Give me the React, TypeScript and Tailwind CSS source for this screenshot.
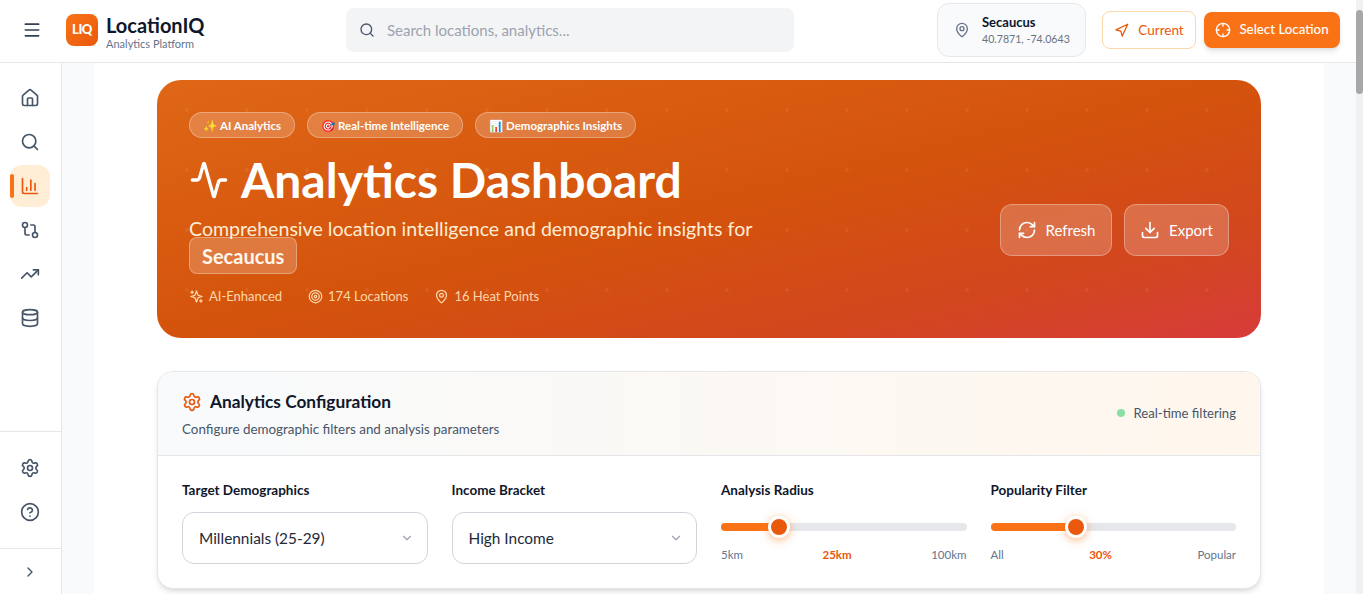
import React from "react";
import {
  Menu, House, Search, ChartColumn, GitCompare, TrendingUp, Database, Settings, CircleHelp, ChevronRight,
  MapPin, Navigation, Crosshair, Activity, Target, RefreshCw, Download, ChevronDown,
} from "lucide-react";

function NavItem({ icon: Icon, active }: { icon: typeof House; active?: boolean }) {
  return (
    <div className={`relative flex h-[42px] w-10 items-center justify-center rounded-xl ${active ? "bg-[#ffedd5] text-[#ea580c]" : "text-[#475569]"}`}>
      {active && <span className="absolute left-0 top-[9px] h-6 w-1 rounded-full bg-[#f97316]" />}
      <Icon size={20} strokeWidth={2} />
    </div>
  );
}

function SparkleIcon() {
  return (
    <svg width="15" height="15" viewBox="0 0 24 24" fill="none" stroke="currentColor" strokeWidth="2" strokeLinecap="round" strokeLinejoin="round">
      <path d="m12 3-1.912 5.813a2 2 0 0 1-1.275 1.275L3 12l5.813 1.912a2 2 0 0 1 1.275 1.275L12 21l1.912-5.813a2 2 0 0 1 1.275-1.275L21 12l-5.813-1.912a2 2 0 0 1-1.275-1.275L12 3Z" />
      <path d="M5 3v4M19 17v4M3 5h4M17 19h4" />
    </svg>
  );
}

function Pill({ emoji, label }: { emoji: string; label: string }) {
  return (
    <span className="flex h-[26px] items-center gap-[3px] rounded-full border border-white/30 bg-white/20 px-[13px] pt-px text-[11.5px] font-bold text-white">
      <span>{emoji}</span>
      {label}
    </span>
  );
}

function Slider({ label, pct, thumb, left, mid, right }: { label: string; pct: number; thumb: number; left: string; mid: string; right: string }) {
  return (
    <div>
      <div className="h-[20px] text-[13.5px] font-bold leading-5 text-[#0f172a]">{label}</div>
      <div className="relative mt-[23px] h-2 rounded-full bg-[#e5e7eb]">
        <div className="h-2 rounded-full bg-[#f97316]" style={{ width: `${pct}%` }} />
        <div className="absolute top-[-7px] size-[22px] rounded-full border-[3px] border-white bg-[#ea580c] shadow-[0_2px_8px_rgba(249,115,22,0.5)]" style={{ left: thumb }} />
      </div>
      <div className="mt-[15px] flex justify-between text-[11.5px] text-[#64748b]">
        <span>{left}</span>
        <span className="font-bold text-[#ea580c]">{mid}</span>
        <span>{right}</span>
      </div>
    </div>
  );
}

function Dropdown({ label, value }: { label: string; value: string }) {
  return (
    <div>
      <div className="mb-[12px] h-[20px] text-[13.5px] font-bold leading-5 text-[#0f172a]">{label}</div>
      <div className="flex h-[52px] items-center justify-between rounded-xl border border-[#d1d5db] bg-white pl-4 pr-[13px] text-[15.4px] text-[#1e293b]">
        <span className="pt-px">{value}</span>
        <ChevronDown size={14} className="text-[#9ca3af]" />
      </div>
    </div>
  );
}

export default function App() {
  return (
    <div className="flex h-[594px] w-full overflow-hidden bg-white font-['Lato','Noto_Sans',sans-serif]">
      <div className="flex min-w-0 flex-1 flex-col">
        {/* Header */}
        <header className="flex h-[63px] shrink-0 items-center border-b border-[#e5e7eb] bg-white pb-[2px] pl-[22px] pr-[16px]">
          <Menu size={20} className="text-[#334155]" />
          <div className="ml-[24px] flex size-8 items-center justify-center rounded-lg bg-gradient-to-br from-[#f97316] to-[#ea580c] text-[13px] font-black tracking-[-0.5px] text-white">LIQ</div>
          <div className="ml-2 mt-[6px] w-[240px]">
            <div className="text-[20px] font-bold leading-[21px] text-[#0f172a]">LocationIQ</div>
            <div className="text-[11px] leading-[15px] text-[#64748b]">Analytics Platform</div>
          </div>
          <div className="flex h-[44px] w-[448px] items-center gap-3 rounded-lg bg-[#f3f4f6] px-[13px] text-[15px] text-[#9ca3af]">
            <Search size={16} className="text-[#475569]" />
            Search locations, analytics...
          </div>
          <div className="ml-auto flex h-[54px] w-[149px] items-center gap-3 rounded-xl border border-[#e5e7eb] bg-[#f8fafc] pl-4">
            <MapPin size={16} className="text-[#64748b]" />
            <div>
              <div className="text-[13px] font-bold leading-[18px] text-[#0f172a]">Secaucus</div>
              <div className="text-[10.6px] leading-[16px] text-[#6b7280]">40.7871, -74.0643</div>
            </div>
          </div>
          <div className="ml-4 flex h-[38px] w-[94px] items-center justify-center gap-[9px] rounded-lg border border-[#fed7aa] bg-white text-[13.5px] text-[#ea580c]">
            <Navigation size={15} />
            Current
          </div>
          <div className="ml-2 flex h-9 w-[136px] items-center justify-center gap-2 rounded-lg bg-[#f97316] text-[13.3px] font-medium text-white shadow-md">
            <Crosshair size={16} />
            Select Location
          </div>
        </header>

        <div className="flex min-h-0 flex-1">
          {/* Sidebar */}
          <aside className="flex w-[62px] shrink-0 flex-col border-r border-[#e5e7eb] bg-white">
            <nav className="flex flex-1 flex-col items-center gap-[2px] pr-px pt-[14px]">
              <NavItem icon={House} />
              <NavItem icon={Search} />
              <NavItem icon={ChartColumn} active />
              <NavItem icon={GitCompare} />
              <NavItem icon={TrendingUp} />
              <NavItem icon={Database} />
            </nav>
            <div className="flex flex-col items-center gap-[2px] border-t border-[#e5e7eb] py-[15px] pr-px">
              <NavItem icon={Settings} />
              <NavItem icon={CircleHelp} />
            </div>
            <div className="flex h-[46px] items-center justify-center border-t border-[#e5e7eb] pr-px text-[#475569]">
              <ChevronRight size={16} />
            </div>
          </aside>

          {/* Main */}
          <main className="min-w-0 flex-1 bg-[#f8fafc] px-8">
            <div className="h-full bg-white px-[63px] pt-[17px]">
              <section className="relative h-[258px] overflow-hidden rounded-[24px] bg-[linear-gradient(to_bottom_right,#df6716_0%,#d4530c_50%,#d2461f_80%,#d73b3a_100%)] px-8 pt-8">
                <div className="absolute inset-0 bg-[radial-gradient(circle,rgba(255,255,255,0.06)_2px,transparent_2px)] bg-[size:60px_60px]" />
                <div className="relative flex items-start justify-between">
                  <div className="w-[640px]">
                    <div className="flex gap-3">
                      <Pill emoji="✨" label="AI Analytics" />
                      <Pill emoji="🎯" label="Real-time Intelligence" />
                      <Pill emoji="📊" label="Demographics Insights" />
                    </div>
                    <h1 className="mt-[9px] flex h-[66px] items-center gap-3 text-[48px] font-bold text-white">
                      <Activity size={40} />
                      Analytics Dashboard
                    </h1>
                    <p className="mt-[2px] text-[19.6px] leading-7 text-[#ffedd5]">Comprehensive location intelligence and demographic insights for</p>
                    <span className="mt-[-6px] inline-block h-[37px] rounded-lg border border-white/30 bg-white/20 px-3 text-[20px] font-bold leading-[36px] text-[#fff7ed]">Secaucus</span>
                    <div className="mt-[13px] flex gap-[26px] text-[13px] text-[#fed7aa]">
                      <span className="flex items-center gap-[5px]"><SparkleIcon />AI-Enhanced</span>
                      <span className="flex items-center gap-[5px]"><Target size={15} />174 Locations</span>
                      <span className="flex items-center gap-[5px]"><MapPin size={15} />16 Heat Points</span>
                    </div>
                  </div>
                  <div className="mt-[92px] flex gap-3">
                    <div className="flex h-[52px] w-[112px] items-center justify-center gap-[9px] rounded-xl border border-white/30 bg-white/20 text-[15px] text-white">
                      <RefreshCw size={20} />
                      Refresh
                    </div>
                    <div className="flex h-[52px] w-[105px] items-center justify-center gap-[9px] rounded-xl border border-white/30 bg-white/20 text-[15px] text-white">
                      <Download size={20} />
                      Export
                    </div>
                  </div>
                </div>
              </section>

              {/* Configuration */}
              <section className="mt-[33px] overflow-hidden rounded-2xl border border-[#e5e7eb] bg-white shadow-md">
                <div className="flex h-[84px] items-center justify-between border-b border-[#e5e7eb] bg-gradient-to-r from-[#f8fafc] to-[#fff7ed] px-6">
                  <div>
                    <div className="flex items-center gap-2 pt-[2px] text-[17.3px] font-bold text-[#0f172a]">
                      <Settings size={20} className="text-[#ea580c]" />
                      Analytics Configuration
                    </div>
                    <div className="mt-[4px] text-[13.4px] text-[#475569]">Configure demographic filters and analysis parameters</div>
                  </div>
                  <div className="flex items-center gap-[9px] text-[13.1px] text-[#475569]">
                    <span className="size-2 rounded-full bg-[#8adfa5]" />
                    Real-time filtering
                  </div>
                </div>
                <div className="grid h-[132px] grid-cols-4 gap-6 px-6 pt-6">
                  <Dropdown label="Target Demographics" value="Millennials (25-29)" />
                  <Dropdown label="Income Bracket" value="High Income" />
                  <Slider label="Analysis Radius" pct={24} thumb={47} left="5km" mid="25km" right="100km" />
                  <Slider label="Popularity Filter" pct={35} thumb={74} left="All" mid="30%" right="Popular" />
                </div>
              </section>
            </div>
          </main>
        </div>
      </div>

      {/* Scrollbar */}
      <div className="w-[7px] shrink-0 bg-[#f1f1f1] pt-[10px]">
        <div className="h-[84px] rounded-full bg-[#a8a8a8]" />
      </div>
    </div>
  );
}
